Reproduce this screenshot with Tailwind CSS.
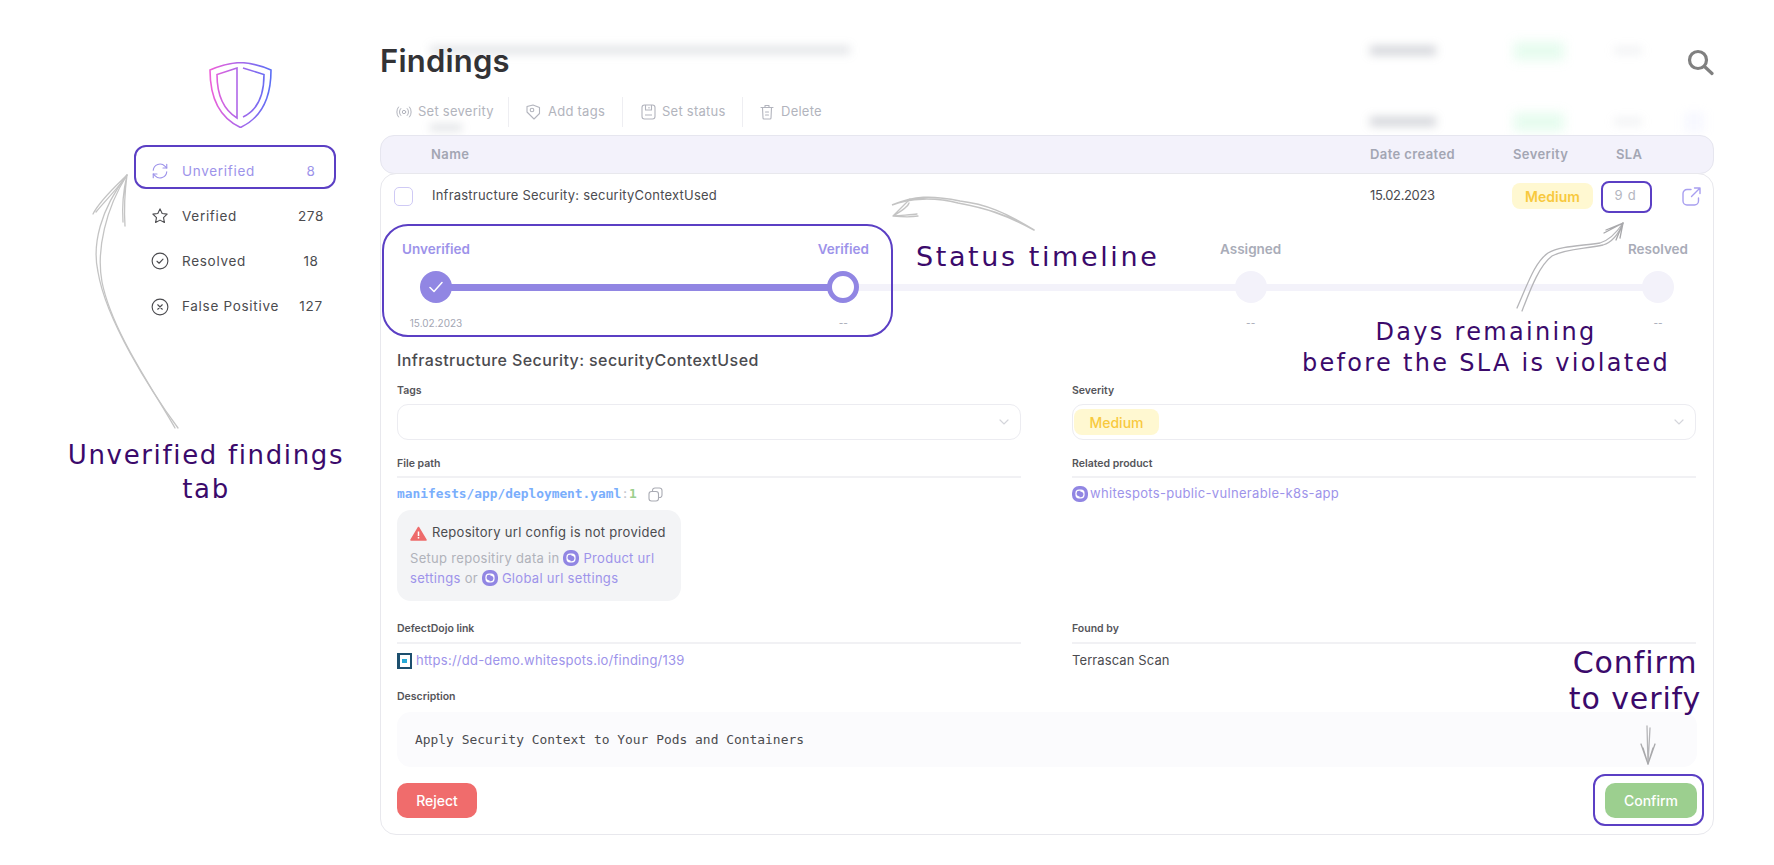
<!DOCTYPE html>
<html lang="en">
<head>
    <meta charset="UTF-8">
    <meta content="width=device-width, initial-scale=1.0" name="viewport">
    <title>Findings</title>
    <script src="https://cdn.jsdelivr.net/npm/@tailwindcss/browser@4"></script>
</head>
<body class="bg-white font-['Inter','Liberation_Sans',sans-serif] text-[#4b4b4f]">
<div class="relative flex w-[1774px] h-[865px] overflow-hidden bg-white">

    <!-- sidebar -->
    <aside class="w-[380px] shrink-0 pt-[62px] pl-[134px] pr-[45px]">
        <div class="flex justify-center h-[66px] ml-[11px]">
            <svg class="w-[66px] h-[66px]" viewBox="7 7 66 66" fill="none" stroke-width="1.600">
                <defs>
                    <linearGradient id="shield" gradientUnits="userSpaceOnUse" x1="10" y1="40" x2="71" y2="40">
                        <stop offset="0" stop-color="#ee5fd8"/>
                        <stop offset="0.5" stop-color="#a868ea"/>
                        <stop offset="1" stop-color="#5a6ef5"/>
                    </linearGradient>
                </defs>
                <path stroke="url(#shield)" d="M10 15 Q25 8.5 40.5 7.5 Q56 8.5 71 15 C71 40 63 62 40.5 72.5 C18 62 10 40 10 15 Z"/>
                <path stroke="url(#shield)" d="M37 13 L17 19.5 C17 40 24 55 37 63 Z"/>
                <path stroke="url(#shield)" d="M43 13 L64 19.5 C64 40 58 55 43 62"/>
            </svg>
        </div>
        <nav class="mt-[20px] text-[13.500px] tracking-[0.7px]">
            <div class="flex items-center h-[45.300px] pl-[17px] text-[#9d93ea]">
                <svg class="w-[18px] h-[18px] mr-[13px]" viewBox="0 0 24 24" fill="none" stroke="currentColor" stroke-width="1.500" stroke-linecap="round" stroke-linejoin="round"><path d="M3 11a9 9 0 0 1 15.500-5.500L21 8"/><path d="M21 3v5h-5"/><path d="M21 13a9 9 0 0 1-15.500 5.500L3 16"/><path d="M8 16H3v5"/></svg>
                <span class="flex-1">Unverified</span><span class="w-[40px] text-center mr-[4px]">8</span>
            </div>
            <div class="flex items-center h-[45.300px] pl-[17px]">
                <svg class="w-[18px] h-[18px] mr-[13px]" viewBox="0 0 24 24" fill="none" stroke="currentColor" stroke-width="1.500" stroke-linejoin="round"><path d="M12 2.500l2.900 6.100 6.600.9-4.800 4.600 1.200 6.600L12 17.500l-5.900 3.200 1.200-6.600L2.500 9.500l6.600-.9z"/></svg>
                <span class="flex-1">Verified</span><span class="w-[40px] text-center mr-[4px]">278</span>
            </div>
            <div class="flex items-center h-[45.300px] pl-[17px]">
                <svg class="w-[18px] h-[18px] mr-[13px]" viewBox="0 0 24 24" fill="none" stroke="currentColor" stroke-width="1.500" stroke-linecap="round" stroke-linejoin="round"><circle cx="12" cy="12" r="10.500"/><path d="M8 12.300l2.800 2.700L16 9.500"/></svg>
                <span class="flex-1">Resolved</span><span class="w-[40px] text-center mr-[4px]">18</span>
            </div>
            <div class="flex items-center h-[45.300px] pl-[17px]">
                <svg class="w-[18px] h-[18px] mr-[13px]" viewBox="0 0 24 24" fill="none" stroke="currentColor" stroke-width="1.500" stroke-linecap="round"><circle cx="12" cy="12" r="10.500"/><path d="M9 9l6 6M15 9l-6 6"/></svg>
                <span class="flex-1 whitespace-nowrap">False Positive</span><span class="w-[40px] text-center mr-[4px]">127</span>
            </div>
        </nav>
    </aside>

    <!-- main -->
    <main class="relative w-[1334px] shrink-0 pt-[40px]">

        <!-- rows scrolled under the header, blurred -->
        <div class="absolute left-[50px] top-[46px] w-[420px] h-[8px] bg-gray-500/20 blur-[5px]"></div>
        <div class="absolute left-[990px] top-[46px] w-[66px] h-[9px] bg-gray-500/30 blur-[5px]"></div>
        <div class="absolute left-[1134px] top-[42px] w-[50px] h-[18px] bg-green-300/20 blur-[6px]"></div>
        <div class="absolute left-[1234px] top-[47px] w-[28px] h-[7px] bg-gray-400/15 blur-[5px]"></div>
        <div class="absolute left-[50px] top-[124px] w-[32px] h-[7px] bg-gray-500/20 blur-[4px]"></div>
        <div class="absolute left-[990px] top-[117px] w-[66px] h-[9px] bg-gray-500/30 blur-[5px]"></div>
        <div class="absolute left-[1134px] top-[113px] w-[50px] h-[18px] bg-green-300/20 blur-[6px]"></div>
        <div class="absolute left-[1234px] top-[118px] w-[28px] h-[7px] bg-gray-400/15 blur-[5px]"></div>
        <div class="absolute left-[1304px] top-[112px] w-[20px] h-[20px] bg-indigo-200/15 blur-[5px]"></div>

        <div class="relative flex items-center justify-between h-[44px]">
            <h1 class="-mt-[2px] text-[31px] font-semibold text-[#333336] tracking-[0.2px]">Findings</h1>
            <svg class="w-[27px] h-[27px] mt-[1px]" viewBox="0 0 27 27" fill="none" stroke="#808080" stroke-width="3.200" stroke-linecap="round"><circle cx="11" cy="11" r="8.500"/><path d="M17.500 17.500l7.500 7"/></svg>
        </div>

        <div class="relative mt-[11px] h-[34px] flex items-center pl-[16px] text-[13px] text-[#b2b4bd] tracking-[0.25px]">
            <div class="flex items-center gap-[6px] w-[113px] h-[30px] border-r border-[#eeeef2]">
                <svg class="w-[16px] h-[12px]" viewBox="0 0 16 12" fill="none" stroke="currentColor" stroke-width="1" stroke-linecap="round"><circle cx="8" cy="6" r="1.700"/><path d="M4.800 2.500a5 5 0 0 0 0 7M11.200 2.500a5 5 0 0 1 0 7M2.500 1a8 8 0 0 0 0 10M13.500 1a8 8 0 0 1 0 10"/></svg>
                <span class="whitespace-nowrap">Set severity</span>
            </div>
            <div class="flex items-center gap-[7px] w-[114px] h-[30px] pl-[17px] border-r border-[#eeeef2]">
                <svg class="w-[15px] h-[16px]" viewBox="0 0 15 16" fill="none" stroke="currentColor" stroke-width="1.100" stroke-linejoin="round"><path d="M1 2.500l6-1.500 6.500 2.500v6L8 15 1 8z"/><circle cx="6" cy="6" r="1.800"/></svg>
                <span>Add tags</span>
            </div>
            <div class="flex items-center gap-[6px] w-[120px] h-[30px] pl-[18px] border-r border-[#eeeef2]">
                <svg class="w-[15px] h-[16px]" viewBox="0 0 15 16" fill="none" stroke="currentColor" stroke-width="1.100" stroke-linejoin="round"><rect x="1" y="1" width="13" height="14" rx="2.500"/><path d="M4.500 1v5h6V1M8 3v1.500M4 11h7"/></svg>
                <span>Set status</span>
            </div>
            <div class="flex items-center gap-[7px] h-[30px] pl-[17px]">
                <svg class="w-[14px] h-[16px]" viewBox="0 0 14 16" fill="none" stroke="currentColor" stroke-width="1.100" stroke-linecap="round" stroke-linejoin="round"><path d="M1 3.500h12M5 3.500V1.500h4v2M2.500 3.500l.5 10.500a1 1 0 0 0 1 1h6a1 1 0 0 0 1-1l.5-10.500M5.500 8h3M5.500 11h3"/></svg>
                <span>Delete</span>
            </div>
        </div>

        <!-- table head -->
        <div class="relative mt-[6px] h-[39px] flex items-center rounded-[14px] border border-[#e6e6ef] bg-[#f3f2fb] text-[13px] font-semibold text-[#a3a6b3] tracking-[0.4px]">
            <span class="ml-[50px] w-[939px]">Name</span>
            <span class="w-[143px] whitespace-nowrap">Date created</span>
            <span class="w-[103px]">Severity</span>
            <span>SLA</span>
        </div>

        <!-- finding card -->
        <div class="relative -mt-px rounded-[16px] border border-[#e8e8ed] bg-white pb-[16px]">
            <div class="flex items-center h-[44px] text-[13px] text-[#4b4b4f]">
                <div class="ml-[13px] w-[19px] h-[19px] rounded-[5px] border border-[#cfcaf5]"></div>
                <span class="ml-[19px] w-[938px] tracking-[0.22px]">Infrastructure Security: securityContextUsed</span>
                <span class="w-[142px] tracking-[-0.35px]">15.02.2023</span>
                <span class="flex items-center justify-center w-[81px] h-[26px] rounded-[8px] bg-[#fff8d1] text-[14px] font-semibold text-[#f8c93e]">Medium</span>
                <span class="w-[59px] ml-[3px] text-center text-[#b4b6bf] tracking-[0.7px]">9 d</span>
                <svg class="ml-[27px] w-[19px] h-[19px]" viewBox="0 0 19 19" fill="none" stroke="#a89ff0" stroke-width="1.400" stroke-linecap="round" stroke-linejoin="round"><path d="M9 2.500H5a4 4 0 0 0-4 4V14a4 4 0 0 0 4 4h7.500a4 4 0 0 0 4-4v-3"/><path d="M9.500 9.500L18 1M12.500 1H18v5.500"/></svg>
            </div>

            <!-- status timeline -->
            <div class="relative flex justify-between mt-[21px] mx-[5px] text-center">
                <div class="absolute left-[50px] right-[50px] top-[45px] h-[7px] bg-[#f3f2fa]"></div>
                <div class="absolute left-[50px] top-[45px] w-[406px] h-[7px] bg-[#9186e3]"></div>
                <div class="relative w-[100px]">
                    <div class="h-[20px] leading-[20px] text-[13.500px] font-semibold text-[#9d93ea]">Unverified</div>
                    <div class="flex items-center justify-center mx-auto mt-[12px] w-[32px] h-[32px] rounded-full bg-[#9186e3]">
                        <svg class="w-[14px] h-[12px]" viewBox="0 0 14 12" fill="none" stroke="#fff" stroke-width="1.500" stroke-linecap="round" stroke-linejoin="round"><path d="M1 6.500l4 4L13 1.500"/></svg>
                    </div>
                    <div class="mt-[12px] h-[16px] leading-[16px] text-[10px] text-[#a3a6b3]">15.02.2023</div>
                </div>
                <div class="relative w-[100px]">
                    <div class="h-[20px] leading-[20px] text-[13.500px] font-semibold text-[#9d93ea]">Verified</div>
                    <div class="mx-auto mt-[12px] w-[32px] h-[32px] rounded-full border-[5px] border-[#9186e3] bg-white"></div>
                    <div class="mt-[12px] h-[16px] leading-[16px] text-[10px] text-[#a3a6b3]">--</div>
                </div>
                <div class="relative w-[100px]">
                    <div class="h-[20px] leading-[20px] text-[13.500px] font-semibold text-[#a9acb8]">Assigned</div>
                    <div class="mx-auto mt-[12px] w-[32px] h-[32px] rounded-full bg-[#f3f2fa]"></div>
                    <div class="mt-[12px] h-[16px] leading-[16px] text-[10px] text-[#a3a6b3]">--</div>
                </div>
                <div class="relative w-[100px]">
                    <div class="h-[20px] leading-[20px] text-[13.500px] font-semibold text-[#a9acb8]">Resolved</div>
                    <div class="mx-auto mt-[12px] w-[32px] h-[32px] rounded-full bg-[#f3f2fa]"></div>
                    <div class="mt-[12px] h-[16px] leading-[16px] text-[10px] text-[#a3a6b3]">--</div>
                </div>
            </div>

            <div class="px-[16px]">
                <h2 class="mt-[17px] h-[24px] leading-[24px] text-[16px] font-[450] text-[#4b4b4f] tracking-[0.4px]">Infrastructure Security: securityContextUsed</h2>

                <div class="grid grid-cols-[624px_624px] gap-x-[51px] mt-[11px]">
                    <div>
                        <div class="h-[16px] leading-[16px] text-[10.500px] font-semibold text-[#55555a]">Tags</div>
                        <div class="flex items-center justify-end mt-[5px] h-[36px] rounded-[11px] border border-[#ececf1] pr-[11px]">
                            <svg class="w-[10px] h-[6px]" viewBox="0 0 10 6" fill="none" stroke="#d4d5db" stroke-width="1.200" stroke-linecap="round"><path d="M1 1l4 4 4-4"/></svg>
                        </div>
                    </div>
                    <div>
                        <div class="h-[16px] leading-[16px] text-[10.500px] font-semibold text-[#55555a]">Severity</div>
                        <div class="flex items-center justify-between mt-[5px] h-[36px] rounded-[11px] border border-[#ececf1] pr-[11px]">
                            <span class="flex items-center justify-center ml-[1px] w-[85px] h-[26px] rounded-[8px] bg-[#fff8d1] text-[14px] font-medium text-[#f8c93e]">Medium</span>
                            <svg class="w-[10px] h-[6px]" viewBox="0 0 10 6" fill="none" stroke="#d4d5db" stroke-width="1.200" stroke-linecap="round"><path d="M1 1l4 4 4-4"/></svg>
                        </div>
                    </div>

                    <div class="mt-[16px]">
                        <div class="h-[16px] leading-[16px] text-[10.500px] font-semibold text-[#55555a]">File path</div>
                        <div class="mt-[4px] border-t-2 border-[#f1f1f4]"></div>
                        <div class="flex items-center mt-[6px] h-[20px] font-['DejaVu_Sans_Mono','Liberation_Mono',monospace] text-[12.850px] font-bold text-[#7aaefc]">
                            <span>manifests/app/deployment.yaml</span><span class="font-normal text-[#c5c6cc]">:</span><span class="text-[#9ccf8f]">1</span>
                            <svg class="ml-[11px] w-[15px] h-[15px]" viewBox="0 0 15 15" fill="none" stroke="#a9abb3" stroke-width="1.100"><rect x="1" y="4.500" width="9.500" height="9.500" rx="2.500"/><path d="M4.500 4.500V3.500A2.500 2.500 0 0 1 7 1h4.500A2.500 2.500 0 0 1 14 3.500V8a2.500 2.500 0 0 1-2.500 2.500h-1"/></svg>
                        </div>
                        <div class="mt-[6px] w-[284px] h-[91px] rounded-[14px] bg-[#f3f4f6] pl-[13px] pt-[13px] text-[13px]">
                            <div class="flex items-center gap-[5px] h-[20px] text-[#4b4b4f] whitespace-nowrap tracking-[0.3px]">
                                <svg class="w-[17px] h-[15px]" viewBox="0 0 17 15"><path fill="#ee6b6b" stroke="#ee6b6b" stroke-width="1.500" stroke-linejoin="round" d="M8.500 1.500L16 14H1z"/><path fill="none" stroke="#fff" stroke-width="1.500" d="M8.500 5.500v4.500M8.500 11v1.500"/></svg>
                                Repository url config is not provided
                            </div>
                            <div class="mt-[5px] leading-[20px] text-[#b0b2ba] tracking-[0.3px]">
                                Setup repositiry data in
                                <svg class="inline-block align-[-3px] w-[16px] h-[16px]" viewBox="0 0 16 16"><rect width="16" height="16" rx="7" fill="#9186e3"/><path fill="none" stroke="#fff" stroke-width="1.200" stroke-linecap="round" d="M7 10.800a3 3 0 0 1-3-3.600 3 3 0 0 1 3-3h2a3 3 0 0 1 3 3M9 5.200a3 3 0 0 1 3 3.600 3 3 0 0 1-3 3H7a3 3 0 0 1-3-3"/></svg>
                                <span class="text-[#9d93ea]">Product url</span><br>
                                <span class="text-[#9d93ea]">settings</span> or
                                <svg class="inline-block align-[-3px] w-[16px] h-[16px]" viewBox="0 0 16 16"><rect width="16" height="16" rx="7" fill="#9186e3"/><path fill="none" stroke="#fff" stroke-width="1.200" stroke-linecap="round" d="M7 10.800a3 3 0 0 1-3-3.600 3 3 0 0 1 3-3h2a3 3 0 0 1 3 3M9 5.200a3 3 0 0 1 3 3.600 3 3 0 0 1-3 3H7a3 3 0 0 1-3-3"/></svg>
                                <span class="text-[#9d93ea]">Global url settings</span>
                            </div>
                        </div>
                    </div>
                    <div class="mt-[16px]">
                        <div class="h-[16px] leading-[16px] text-[10.500px] font-semibold text-[#55555a]">Related product</div>
                        <div class="mt-[4px] border-t-2 border-[#f1f1f4]"></div>
                        <div class="flex items-center gap-[2px] mt-[6px] h-[20px] text-[13px] text-[#9d93ea] tracking-[0.32px]">
                            <svg class="w-[16px] h-[16px]" viewBox="0 0 16 16"><rect width="16" height="16" rx="7" fill="#9186e3"/><path fill="none" stroke="#fff" stroke-width="1.200" stroke-linecap="round" d="M7 10.800a3 3 0 0 1-3-3.600 3 3 0 0 1 3-3h2a3 3 0 0 1 3 3M9 5.200a3 3 0 0 1 3 3.600 3 3 0 0 1-3 3H7a3 3 0 0 1-3-3"/></svg>
                            whitespots-public-vulnerable-k8s-app
                        </div>
                    </div>

                    <div class="mt-[20px]">
                        <div class="h-[16px] leading-[16px] text-[10.500px] font-semibold text-[#55555a]">DefectDojo link</div>
                        <div class="mt-[5px] border-t-2 border-[#f1f1f4]"></div>
                        <div class="flex items-center gap-[4px] mt-[7px] h-[20px] text-[13px] text-[#9d93ea] tracking-[0.24px]">
                            <svg class="w-[15px] h-[16px]" viewBox="0 0 15 16"><path fill="#1d4f6e" d="M0 0h15v16H0z"/><path fill="#fff" d="M3 2h10v12H3z"/><path fill="#27a9d6" d="M5 6h5v4H5z"/></svg>
                            https://dd-demo.whitespots.io/finding/139
                        </div>
                    </div>
                    <div class="mt-[20px]">
                        <div class="h-[16px] leading-[16px] text-[10.500px] font-semibold text-[#55555a]">Found by</div>
                        <div class="mt-[5px] border-t-2 border-[#f1f1f4]"></div>
                        <div class="flex items-center mt-[7px] h-[20px] text-[13px] text-[#4b4b4f] tracking-[0.1px]">Terrascan Scan</div>
                    </div>
                </div>

                <div class="mt-[18px] h-[16px] leading-[16px] text-[10.500px] font-semibold text-[#55555a]">Description</div>
                <div class="flex items-center mt-[7px] h-[55px] pt-[1px] rounded-[14px] bg-[#fbfbfd] pl-[18px] font-['DejaVu_Sans_Mono','Liberation_Mono',monospace] text-[12.930px] text-[#4b4b4f]">Apply Security Context to Your Pods and Containers</div>

                <div class="flex justify-between mt-[16px]">
                    <button class="w-[80px] h-[35px] rounded-[10px] bg-[#f06c6c] text-[14px] font-medium text-white">Reject</button>
                    <button class="w-[92px] h-[35px] rounded-[10px] bg-[#9ccf8f] text-[14px] font-medium text-white">Confirm</button>
                </div>
            </div>
        </div>
    </main>

    <!-- tutorial annotations drawn over the screenshot -->
    <div class="absolute left-[134px] top-[145px] w-[202px] h-[44px] rounded-[12px] border-2 border-[#5b3fc4]"></div>
    <div class="absolute left-[382px] top-[224px] w-[511px] h-[113px] rounded-[26px] border-2 border-[#5b3fc4]"></div>
    <div class="absolute left-[1601px] top-[181px] w-[51px] h-[32px] rounded-[8px] border-2 border-[#5b3fc4]"></div>
    <div class="absolute left-[1593px] top-[774px] w-[111px] h-[52px] rounded-[12px] border-2 border-[#5b3fc4]"></div>

    <svg class="absolute left-0 top-0 w-[1774px] h-[865px] pointer-events-none" viewBox="0 0 1774 865" fill="none" stroke="#c4c4c4" stroke-width="1.300" stroke-linecap="round">
        <path d="M127 175C100 210 92 245 98 272C106 320 150 390 178 428"/>
        <path d="M127 175C106 208 96 250 102 282C112 332 155 392 175 428"/>
        <path d="M127 175C118 184 100 200 93 214M127 175C120 186 104 202 96 212M127 175C125 190 124 210 125 226M127 175C123 192 122 208 123 222"/>
        <path d="M1034 230C1005 212 985 204 960 201C930 195 915 196 892 205C909 198 935 197 958 203C985 208 1005 214 1034 230" stroke-width="1.600"/>
        <path d="M893 216C899 210 905 204 910 199M893 216C900 212 908 207 909 203M893 216C903 215 912 215 917 214M893 216C903 217 912 217 918 216"/>
        <path d="M1517 308C1528 283 1535 262 1548 253C1560 246 1580 246 1600 243C1610 240 1617 232 1623 223" stroke="#b5b5b8"/>
        <path d="M1522 311C1532 285 1540 265 1552 256C1565 249 1585 249 1603 245C1613 242 1619 233 1623 223" stroke="#b5b5b8"/>
        <path d="M1623 223L1606 230M1623 223L1604 233M1623 223L1620 238M1623 223L1616 240" stroke="#a8a8ab"/>
        <path d="M1647 726L1648 764M1650 728L1648 764" stroke="#b5b5b8"/>
        <path d="M1648 764L1641 744M1648 764L1655 744M1648 764L1643 748M1648 764L1653 748" stroke="#a8a8ab"/>
    </svg>

    <div class="absolute left-[916px] top-[240px] font-['DejaVu_Sans',sans-serif] text-[27px] leading-[34px] tracking-[2.600px] text-[#3b0a6b] whitespace-nowrap">Status timeline</div>
    <div class="absolute left-[1286px] top-[317px] w-[400px] text-center font-['DejaVu_Sans',sans-serif] text-[24px] leading-[31px] tracking-[2.300px] text-[#3b0a6b] whitespace-nowrap">Days remaining<br>before the SLA is violated</div>
    <div class="absolute left-[56px] top-[438px] w-[300px] text-center font-['DejaVu_Sans',sans-serif] text-[26px] leading-[34px] tracking-[1.650px] text-[#3b0a6b] whitespace-nowrap">Unverified findings<br>tab</div>
    <div class="absolute left-[1535px] top-[645px] w-[200px] text-center font-['DejaVu_Sans',sans-serif] text-[30px] leading-[36px] tracking-[0.900px] text-[#3b0a6b] whitespace-nowrap">Confirm<br>to verify</div>
</div>
</body>
</html>
